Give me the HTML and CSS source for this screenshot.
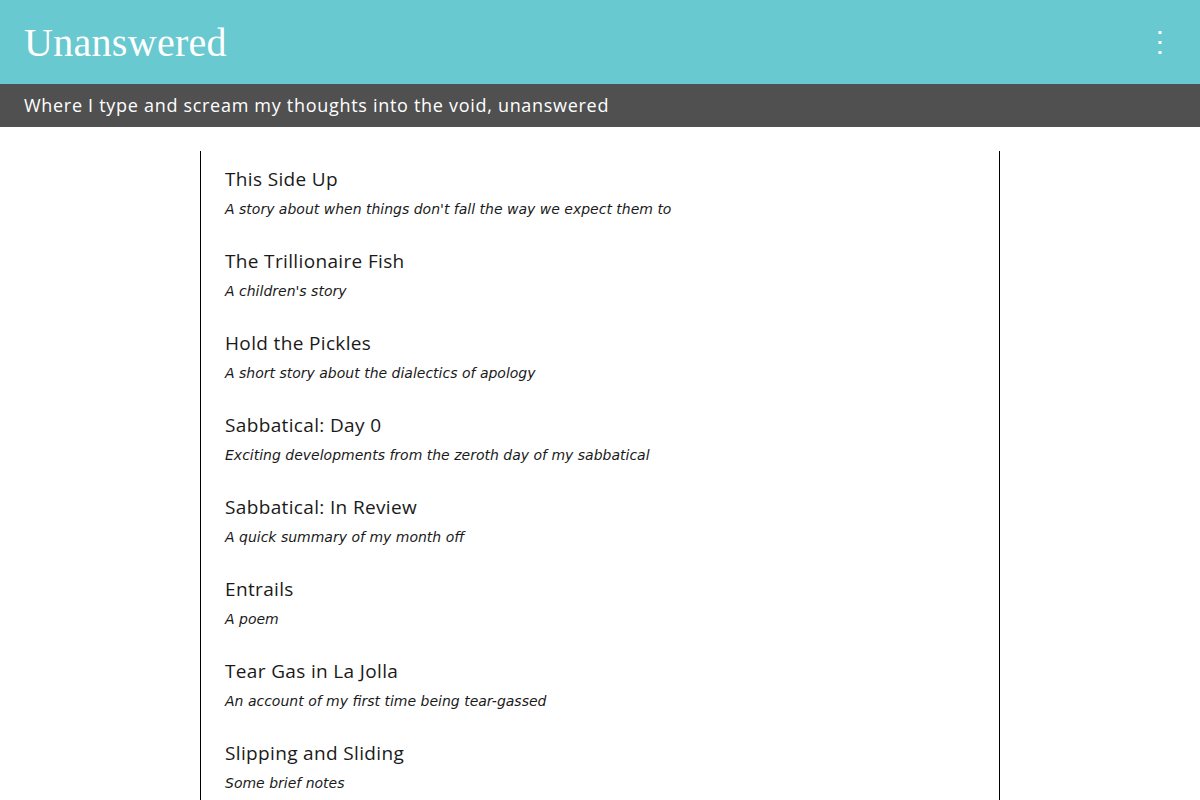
FILE: index.html
```html
<!DOCTYPE html>
<html lang="en">

<head>
    <meta charset="UTF-8">
    <meta name="viewport" content="width=device-width, initial-scale=1.0">
    <title>Unanswered</title>
    <link rel="stylesheet" href="styles.css">
</head>

<body>
    <div id="header">
        <h1 class="site-title">Unanswered</h1>
        <span class="menu-btn">
            <svg width="6" height="28" viewBox="0 0 6 28">
                <rect x="1.5" y="3" width="3" height="3" fill="#fff"/>
                <rect x="1.5" y="13" width="3" height="3" fill="#fff"/>
                <rect x="1.5" y="23" width="3" height="3" fill="#fff"/>
            </svg>
        </span>
    </div>
    <div id="tagline">Where I type and scream my thoughts into the void, unanswered</div>

    <ul id="posts">
        <li>
            <a class="post-title" href="#">This Side Up</a>
            <p class="post-desc">A story about when things don't fall the way we expect them to</p>
        </li>
        <li>
            <a class="post-title" href="#">The Trillionaire Fish</a>
            <p class="post-desc">A children's story</p>
        </li>
        <li>
            <a class="post-title" href="#">Hold the Pickles</a>
            <p class="post-desc">A short story about the dialectics of apology</p>
        </li>
        <li>
            <a class="post-title" href="#">Sabbatical: Day 0</a>
            <p class="post-desc">Exciting developments from the zeroth day of my sabbatical</p>
        </li>
        <li>
            <a class="post-title" href="#">Sabbatical: In Review</a>
            <p class="post-desc">A quick summary of my month off</p>
        </li>
        <li>
            <a class="post-title" href="#">Entrails</a>
            <p class="post-desc">A poem</p>
        </li>
        <li>
            <a class="post-title" href="#">Tear Gas in La Jolla</a>
            <p class="post-desc">An account of my first time being tear-gassed</p>
        </li>
        <li>
            <a class="post-title" href="#">Slipping and Sliding</a>
            <p class="post-desc">Some brief notes</p>
        </li>
    </ul>
</body>

</html>
```

FILE: styles.css
```css
* {
    margin: 0;
    padding: 0;
    box-sizing: border-box;
}

body {
    font-family: "Open Sans", "Liberation Sans", sans-serif;
    color: #1a1a1a;
    background: #fff;
}

#header {
    height: 84px;
    background: #68c9d0;
    display: flex;
    align-items: center;
    justify-content: space-between;
    padding: 0 24px;
}

.site-title {
    font-family: "Liberation Serif", serif;
    font-weight: normal;
    font-size: 40px;
    color: #fff;
    letter-spacing: 0.3px;
}

.menu-btn {
    display: flex;
    margin-right: 13px;
    cursor: pointer;
}

#tagline {
    height: 43px;
    line-height: 43px;
    background: #505050;
    color: #fff;
    font-size: 18px;
    padding: 0 24px;
    letter-spacing: 0.7px;
}

#posts {
    width: 800px;
    margin: 24px auto 0;
    border-left: 1px solid #000;
    border-right: 1px solid #000;
    padding: 16px 24px 0;
    list-style: none;
}

#posts li {
    padding-bottom: 30px;
}

.post-title {
    display: block;
    font-size: 19px;
    line-height: 24px;
    letter-spacing: 0.35px;
    color: #1a1a1a;
    text-decoration: none;
}

.post-desc {
    margin-top: 8px;
    font-family: "DejaVu Sans", "Open Sans", sans-serif;
    font-size: 14px;
    line-height: 20px;
    font-style: italic;
}
```
